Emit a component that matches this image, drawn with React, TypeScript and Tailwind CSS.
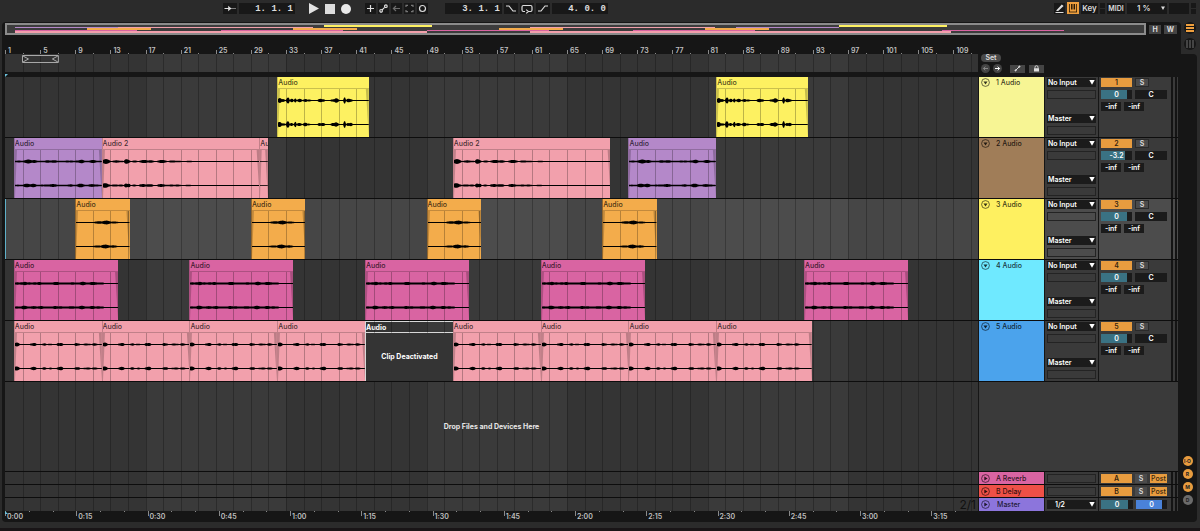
import React from 'react';

const TOTAL_BARS = 110.8;
const pct = (bars: number) => `${(bars / TOTAL_BARS) * 100}%`;

type Kind = 'yellow' | 'purple' | 'pink' | 'orange' | 'magenta' | 'loop' | 'stub' | 'off';
type ClipData = { start: number; end: number; kind: Kind; name: string };

const FILL: Record<Kind, string> = {
  yellow: 'bg-[#fdf161]',
  purple: 'bg-[#b488c9]',
  pink: 'bg-[#f2a0ac]',
  orange: 'bg-[#f3ac4b]',
  magenta: 'bg-[#d964a2]',
  loop: 'bg-[#f2a0ac]',
  stub: 'bg-[#f2a0ac]',
  off: 'bg-[#343434]',
};

/* Bursts of each sample as [from, to, peak], in pixels at 8.78 px per bar. */
const BURSTS: Record<Kind, { base: number; until: number; hits: number[][] }> = {
  yellow: {
    base: 0.6,
    until: 76,
    hits: [[-1, 4, 2.6], [3, 8, 1.6], [8, 12, 3.4], [12, 16, 1.9], [16, 19, 3.2], [19, 25, 1.7], [25, 30, 2], [29, 34, 1], [40, 48, 2], [53, 57, 1.8], [56, 62, 2.2], [66, 69, 3.4], [69, 76, 2.2]],
  },
  purple: {
    base: 0.7,
    until: 88,
    hits: [[0, 8, 1], [7, 23, 2], [24, 30, 1.2], [28, 45, 1.5], [50, 60, 1.3], [61, 71, 1.9], [73, 86, 1.5]],
  },
  pink: {
    base: 0.6,
    until: 92,
    hits: [[-2, 8, 2.4], [7, 22, 1.2], [21, 28, 2.6], [28, 36, 1], [35, 52, 1.6], [53, 66, 1.5], [64, 80, 1.1], [78, 94, 0.8]],
  },
  orange: { base: 0.5, until: 44, hits: [[16, 44, 1.5], [22, 38, 1.9]] },
  magenta: {
    base: 0.9,
    until: 90,
    hits: [[0, 5, 1.2], [4, 13, 2], [11, 24, 1.5], [22, 29, 1.9], [30, 37, 1.2], [36, 50, 1.7], [50, 62, 1.4], [61, 74, 1.7], [72, 88, 1.6]],
  },
  loop: {
    base: 0.6,
    until: 88,
    hits: [[-2, 5, 2], [15, 22, 1.8], [27, 32, 1.2], [33, 38, 1.2], [42, 49, 2.1], [60, 66, 1.8], [69, 77, 1.3], [78, 84, 1.5]],
  },
  stub: { base: 0.5, until: 0, hits: [] },
  off: { base: 0, until: 0, hits: [] },
};

function wavePath(kind: Kind, width: number, mid: number, seed: number) {
  const { base, until, hits } = BURSTS[kind];
  const up: string[] = [];
  const down: string[] = [];
  for (let x = 0; x <= width; x += 1) {
    const noise = 0.6 + 0.4 * Math.abs(Math.sin(x * 12.9 + seed * 3.7));
    let amp = x < until ? base : 0.4;
    for (const [from, to, peak] of hits) {
      if (x >= from && x <= to) {
        const shape = Math.sqrt(Math.max(0, Math.sin((Math.PI * (x - from)) / (to - from))));
        amp = Math.max(amp, peak * shape * noise);
      }
    }
    up.push(`${x},${(mid - amp).toFixed(2)}`);
    down.unshift(`${x},${(mid + amp).toFixed(2)}`);
  }
  return `M${up.join('L')}L${down.join('L')}Z`;
}

function Clip({ clip }: { clip: ClipData }) {
  const { start, end, kind, name } = clip;
  const width = Math.round((end - start) * 8.78);
  const style = { left: pct(start), width: pct(end - start) };
  if (kind === 'off') {
    return (
      <div className="absolute inset-y-0 flex flex-col border-l border-[#d8d8d8]" style={style}>
        <div className="h-3 overflow-hidden border-y border-[#d8d8d8] text-[7px] leading-[11px] font-bold text-white">{name}</div>
        <div className="relative z-30 flex flex-1 items-center justify-center bg-[#343434] text-[7px] font-bold whitespace-nowrap text-white">
          Clip Deactivated
        </div>
      </div>
    );
  }
  return (
    <div className={`absolute inset-y-0 flex flex-col border-l border-black/20 ${FILL[kind]}`} style={style}>
      <div className={`relative z-30 h-3 overflow-hidden border-b border-b-black/20 text-[7px] leading-[11px] font-medium whitespace-nowrap text-black/75 ${FILL[kind]}`}>
        {name}
      </div>
      <svg className="min-h-0 w-full flex-1" viewBox={`0 0 ${width} 48`} preserveAspectRatio="none" aria-hidden="true">
        <path d="M0 0H2L0 48Z" fill="#000" opacity=".2" />
        <path d={`M${width - 3} 0H${width}V48Z`} fill="#000" opacity=".22" />
        <path d={wavePath(kind, width, 11.5, 1)} />
        <path d={wavePath(kind, width, 35.5, 2)} />
      </svg>
    </div>
  );
}

const CELLS = Array.from({ length: 56 }, (_, i) => i);

function Shading({ bright = false }: { bright?: boolean }) {
  return (
    <div className="absolute inset-0 flex overflow-hidden" aria-hidden="true">
      {CELLS.map((i) => {
        const light = Math.floor(i / 8) % 2 === 1;
        const tone = bright ? (light ? 'bg-[#4c4c4c]' : 'bg-[#464646]') : light ? 'bg-[#3a3a3a]' : 'bg-[#343434]';
        return <div key={i} className={`shrink-0 ${tone}`} style={{ width: pct(2) }} />;
      })}
    </div>
  );
}

function Lines() {
  return (
    <div className="pointer-events-none absolute inset-0 z-20 flex overflow-hidden" aria-hidden="true">
      {CELLS.map((i) => (
        <div key={i} className={`shrink-0 ${i ? 'border-l border-black/25' : ''}`} style={{ width: pct(2) }} />
      ))}
    </div>
  );
}

function Disclosure({ right = false, label }: { right?: boolean; label: string }) {
  return (
    <button aria-label={label} className="size-[9px] shrink-0">
      <svg viewBox="0 0 9 9" className="size-[9px]">
        <circle cx="4.5" cy="4.5" r="3.9" fill="none" stroke="#000" strokeOpacity=".7" strokeWidth=".8" />
        <path d={right ? 'M3.3 2.4L6.6 4.5L3.3 6.6Z' : 'M2.5 3.4H6.5L4.5 6.4Z'} fill="#000" fillOpacity=".8" />
      </svg>
    </button>
  );
}

function Routing({ label, options, inset = false }: { label: string; options: string[]; inset?: boolean }) {
  return (
    <label className="relative block h-[9px]">
      <select
        aria-label={label}
        className={`block h-[9px] w-full appearance-none bg-[#1b1b1b] text-[7px] leading-[9px] font-semibold text-white ${inset ? 'pl-2' : 'pl-px'}`}
      >
        {options.map((o) => (
          <option key={o}>{o}</option>
        ))}
      </select>
      <svg viewBox="0 0 6 5" className="pointer-events-none absolute top-0.5 right-px h-[5px] w-1.5" aria-hidden="true">
        <path d="M.3 0H5.7L3 4.8Z" fill="#fff" />
      </svg>
    </label>
  );
}

const Slot = () => <div className="h-[9px] border border-[#232323]" />;

function Meter() {
  return (
    <div className="flex gap-0.5 self-stretch">
      <div className="w-0.5 bg-[#141414]" />
      <div className="w-0.5 bg-[#141414]" />
    </div>
  );
}

const CHIP = 'h-[9px] text-center text-[7px] leading-[9px] font-semibold';

type TrackData = {
  n: number;
  header: string;
  volume: string;
  volumeFill: string;
  selected?: boolean;
  clips: ClipData[];
};

const many = (kind: Kind, name: string, starts: number[], length: number): ClipData[] =>
  starts.map((start) => ({ kind, name, start, end: start + length }));

const TRACKS: TrackData[] = [
  { n: 1, header: 'bg-[#f7f594]', volume: '0', volumeFill: 'from-85% to-85%', clips: many('yellow', 'Audio', [31, 81], 10.45) },
  {
    n: 2,
    header: 'bg-[#a07d58]',
    volume: '-3.2',
    volumeFill: 'from-78% to-78%',
    clips: [
      ...many('purple', 'Audio', [1, 71], 10),
      ...many('pink', 'Audio 2', [11, 51], 17.95),
      { kind: 'stub', name: 'Audio', start: 28.95, end: 29.95 },
    ],
  },
  { n: 3, header: 'bg-[#fef060]', volume: '0', volumeFill: 'from-85% to-85%', selected: true, clips: many('orange', 'Audio', [8, 28, 48, 68], 6.2) },
  { n: 4, header: 'bg-[#6fe9ff]', volume: '0', volumeFill: 'from-85% to-85%', clips: many('magenta', 'Audio', [1, 21, 41, 61, 91], 11.85) },
  {
    n: 5,
    header: 'bg-[#4ba3ec]',
    volume: '0',
    volumeFill: 'from-85% to-85%',
    clips: [
      ...many('loop', 'Audio', [1, 11, 21, 31], 10),
      { kind: 'off', name: 'Audio', start: 41, end: 51 },
      ...many('loop', 'Audio', [51, 61, 71], 10),
      { kind: 'loop', name: 'Audio', start: 81, end: 91.9 },
    ],
  },
];

const CONTROLS = 'grid w-[200px] shrink-0 grid-cols-[65px_53px_1fr] gap-px pl-px';

function Track({ track }: { track: TrackData }) {
  const tone = track.selected ? 'bg-[#4c4c4c]' : 'bg-[#3a3a3a]';
  return (
    <div className="flex h-[61px] border-b border-[#0d0d0d]">
      <div className="relative isolate min-w-0 flex-1">
        <Shading bright={track.selected} />
        {track.clips.map((c) => (
          <Clip key={c.start} clip={c} />
        ))}
        <Lines />
        {track.selected && <div className="absolute inset-y-0 left-0 z-30 w-px bg-[#5fb0c8]" />}
      </div>
      <div className={CONTROLS}>
        <div className={`flex items-start gap-1.5 px-0.5 pt-px text-[7px] leading-[9px] font-medium text-black/80 ${track.header}`}>
          <Disclosure label={`Fold track ${track.n}`} />
          {track.n} Audio
        </div>
        <div className={`flex flex-col gap-[3px] px-0.5 pt-px ${tone}`}>
          <Routing label={`Input of track ${track.n}`} options={['No Input']} />
          <Slot />
          <div className="h-[9px]" />
          <Routing label={`Output of track ${track.n}`} options={['Master']} />
          <Slot />
        </div>
        <div className={`flex justify-between pr-px pl-0.5 ${tone}`}>
          <div className="flex flex-col gap-[3px] pt-px">
            <div className="flex gap-[3px]">
              <button className={`${CHIP} w-[31px] bg-[#e89c3f] text-black/80`}>{track.n}</button>
              <button className="h-[9px] w-3.5 border border-[#2a2a2a] bg-[#4b4b4b] text-center text-[7px] leading-[7px] font-semibold text-[#ddd]">S</button>
            </div>
            <div className="flex gap-[3px]">
              <input
                aria-label={`Volume of track ${track.n}`}
                defaultValue={track.volume}
                className={`${CHIP} w-[31px] bg-linear-to-r from-[#3a7283] to-[#1b1b1b] text-white ${track.volumeFill}`}
              />
              <input aria-label={`Pan of track ${track.n}`} defaultValue="C" className={`${CHIP} w-8 bg-[#1b1b1b] text-white`} />
            </div>
            <div className="flex gap-[3px]">
              <input aria-label={`Send A of track ${track.n}`} defaultValue="-inf" className={`${CHIP} w-5 bg-[#1b1b1b] text-white`} />
              <input aria-label={`Send B of track ${track.n}`} defaultValue="-inf" className={`${CHIP} w-5 bg-[#1b1b1b] text-white`} />
            </div>
          </div>
          <Meter />
        </div>
      </div>
    </div>
  );
}

function ReturnTrack({ letter, name, header }: { letter: string; name: string; header: string }) {
  return (
    <div className="flex h-[13px] border-b border-[#0d0d0d]">
      <div className="relative isolate min-w-0 flex-1">
        <Shading />
        <Lines />
      </div>
      <div className={CONTROLS}>
        <div className={`flex items-center gap-1.5 px-0.5 text-[7px] leading-[9px] font-medium text-black/80 ${header}`}>
          <Disclosure right label={`Unfold ${name}`} />
          {letter} {name}
        </div>
        <div className="flex flex-col justify-center bg-[#3a3a3a] px-0.5">
          <Slot />
        </div>
        <div className="flex items-center justify-between bg-[#3a3a3a] pr-px pl-0.5">
          <div className="flex w-[66px] justify-between">
            <button className={`${CHIP} w-[31px] bg-[#e89c3f] text-black/80`}>{letter}</button>
            <button className={`${CHIP} w-3 bg-[#4b4b4b] text-[#ddd]`}>S</button>
            <button className="h-[9px] w-[17px] bg-[#e89c3f] text-center text-[7px] leading-[9px] font-medium text-black/80">Post</button>
          </div>
          <Meter />
        </div>
      </div>
    </div>
  );
}

function MasterTrack() {
  return (
    <div className="flex h-[13px]">
      <div className="relative isolate flex min-w-0 flex-1 items-center justify-end">
        <Shading />
        <Lines />
        <span className="relative z-30 pr-0.5 text-[12px] leading-[13px] text-[#111]">2/1</span>
      </div>
      <div className={CONTROLS}>
        <div className="flex items-center gap-[7px] bg-[#8c75dc] px-0.5 text-[7px] leading-[9px] font-medium text-black/80">
          <Disclosure right label="Unfold Master" />
          Master
        </div>
        <div className="flex flex-col justify-center bg-[#3a3a3a] px-0.5">
          <Routing label="Cue output" options={['1/2']} inset />
        </div>
        <div className="flex items-center justify-between bg-[#3a3a3a] pr-px pl-0.5">
          <div className="flex gap-[3px]">
            <input aria-label="Master volume" defaultValue="0" className={`${CHIP} w-8 bg-linear-to-r from-[#3a7283] from-85% to-[#1b1b1b] to-85% text-white`} />
            <input aria-label="Cue volume" defaultValue="0" className={`${CHIP} w-[31px] bg-linear-to-r from-[#4a82d9] from-85% to-[#1b1b1b] to-85% text-white`} />
          </div>
          <Meter />
        </div>
      </div>
    </div>
  );
}

function Overview() {
  return (
    <div className="flex h-3 flex-1 flex-col bg-[#3c3c3c] py-0.5 ring-2 ring-[#8b8b8b] ring-inset">
      {TRACKS.map((t) => (
        <div key={t.n} className="relative min-h-0 flex-1">
          {t.clips
            .filter((c) => c.kind !== 'off')
            .map((c) => (
              <div key={c.start} className={`absolute inset-y-0 ${FILL[c.kind]}`} style={{ left: pct(c.start), width: pct(c.end - c.start) }} />
            ))}
        </div>
      ))}
    </div>
  );
}

function BarRuler() {
  return (
    <div className="mr-[203px] flex h-[19px] overflow-hidden">
      {CELLS.map((i) => (
        <div key={i} className="flex shrink-0 items-end" style={{ width: pct(2) }}>
          <div className={`w-px shrink-0 bg-[#8a8a8a] ${i % 2 ? 'h-px' : 'h-1'}`} />
          {i % 2 === 0 && <span className="ml-0.5 text-[7px] leading-[7px] font-semibold text-[#c0c0c0]">{i * 2 + 1}</span>}
        </div>
      ))}
    </div>
  );
}

function TimeRuler() {
  return (
    <div className="relative mr-[200px] flex h-[11px] overflow-hidden">
      {Array.from({ length: 41 }, (_, i) => {
        const seconds = i * 5;
        const label = `${Math.floor(seconds / 60)}:${String(seconds % 60).padStart(2, '0')}`;
        return (
          <div key={i} className="flex shrink-0" style={{ width: pct(2.706) }}>
            <div className={`w-px shrink-0 bg-[#8a8a8a] ${i % 3 ? 'h-px' : 'h-[5px]'}`} />
            {i % 3 === 0 && <span className="ml-px text-[7px] leading-[11px] font-semibold text-[#c0c0c0]">{label}</span>}
          </div>
        );
      })}
      <svg className="absolute top-0 left-0 size-[3px]" viewBox="0 0 3 3" aria-hidden="true"><path d="M0 0L3 3H0Z" fill="#6cc3de" /></svg>
    </div>
  );
}

type ToolProps = { label: string; children: React.ReactNode; className?: string; tone?: string };

function Tool({ label, children, className = 'w-[11px]', tone = 'text-[#ddd]' }: ToolProps) {
  return (
    <button aria-label={label} className={`flex h-[11px] items-center justify-center bg-[#181818] ${tone} ${className}`}>
      {children}
    </button>
  );
}

const Glyph = ({ d, w = 11 }: { d: string; w?: number }) => (
  <svg width={w} height="11" viewBox={`0 0 ${w} 11`} fill="none" stroke="currentColor" strokeWidth="1.2" aria-hidden="true">
    <path d={d} />
  </svg>
);

const POSITION = 'h-[11px] bg-[#181818] pt-px text-right font-["Liberation_Mono",monospace] text-[9px] leading-[10px] font-bold text-[#ddd]';

function TopBar() {
  return (
    <header className="flex h-[22px] items-start justify-between gap-4 px-1 pt-[3px]">
      <div className="ml-[219px] flex items-start">
        <Tool label="Nudge" className="mr-0.5 w-3.5">
          <svg width="14" height="11" viewBox="0 0 14 11" aria-hidden="true">
            <path d="M1.5 5.5H12.5" stroke="currentColor" strokeDasharray="7 1 1 1 1" />
            <path d="M5.2 2.8L8.4 5.5L5.2 8.2Z" fill="currentColor" />
          </svg>
        </Tool>
        <input aria-label="Arrangement position" defaultValue="1. 1. 1" className={`${POSITION} mr-3.5 w-14 pr-0.5`} />
        <button aria-label="Play" className="mr-1.5 text-[#e2e2e2]">
          <svg width="10" height="11" viewBox="0 0 10 11"><path d="M0 0L10 5.5L0 11Z" fill="currentColor" /></svg>
        </button>
        <button aria-label="Stop" className="mt-px mr-1.5 size-2.5 bg-[#dcdcdc]" />
        <button aria-label="Record" className="mt-px mr-3.5 size-2.5 rounded-full bg-[#e8e8e8]" />
        <div className="mr-[17px] flex gap-0.5">
          <Tool label="Overdub"><Glyph d="M5.5 2V9M2 5.5H9" /></Tool>
          <Tool label="Automation arm"><Glyph d="M4.2 6.8L6.8 4.2M1.8 7.8a1.3 1.3 0 1 0 2.6 0a1.3 1.3 0 1 0-2.6 0M6.6 3.2a1.3 1.3 0 1 0 2.6 0a1.3 1.3 0 1 0-2.6 0" /></Tool>
          <Tool label="Re-enable automation" tone="text-[#6c6c6c]"><Glyph d="M9 5.5H2.4M5 3L2.4 5.5L5 8" /></Tool>
          <Tool label="Capture" tone="text-[#777]"><Glyph d="M2 4V2.3H4M7 2.3H9V4M9 7V8.7H7M4 8.7H2V7" /></Tool>
          <Tool label="Session record"><Glyph d="M2.5 5.5a3 3 0 1 0 6 0a3 3 0 1 0-6 0" /></Tool>
        </div>
        <div className="flex gap-0.5">
          <input aria-label="Loop start" defaultValue="3. 1. 1" className={`${POSITION} w-[57px] pr-0.5`} />
          <Tool label="Punch in" className="w-3.5"><Glyph w={14} d="M2 3H5L9 8H12" /></Tool>
          <Tool label="Loop" className="w-3.5"><Glyph w={14} d="M5 8.5H3.4Q2 8.5 2 7V4Q2 2.5 3.4 2.5H10.6Q12 2.5 12 4V7Q12 8.5 10.6 8.5H7.5M6.2 6.6L8.4 8.5L6.2 10.4" /></Tool>
          <Tool label="Punch out" className="w-3.5"><Glyph w={14} d="M2 8H5L9 3H12" /></Tool>
          <input aria-label="Loop length" defaultValue="4. 0. 0" className={`${POSITION} w-14 pr-0.5`} />
        </div>
      </div>
      <div className="flex items-start gap-0.5 text-[8px] leading-[11px] font-semibold">
        <Tool label="Draw mode">
          <svg width="11" height="11" viewBox="0 0 11 11" fill="currentColor" aria-hidden="true">
            <path d="M2.4 7.2L7.8 1.4L9.6 3L4.2 8H2.4ZM1.5 9H9.5V10H1.5Z" />
          </svg>
        </Tool>
        <button aria-label="Computer MIDI keyboard" className="-mt-px h-3 w-3 bg-[#ee9f3e]">
          <svg width="12" height="12" viewBox="0 0 12 12" fill="none" stroke="#2a1a05" aria-hidden="true">
            <path d="M2.5 2V10M9.5 2V10M2 10H10" strokeWidth=".8" />
            <path d="M4.8 2V7.5M7.3 2V7.5" strokeWidth="1.5" />
          </svg>
        </button>
        <Tool label="Key map" className="w-[17px]">Key</Tool>
        <div className="flex h-[11px] w-[5px] flex-col gap-px"><i className="flex-1 bg-[#181818]" /><i className="flex-1 bg-[#181818]" /></div>
        <Tool label="MIDI map" className="w-[18px] text-[7px]">MIDI</Tool>
        <label className="relative block h-[11px] w-10">
          <select aria-label="CPU load" className="block h-[11px] w-full appearance-none bg-[#181818] pl-2.5 text-[8px] leading-[11px] font-semibold text-[#ddd]">
            <option>1 %</option>
          </select>
          <svg viewBox="0 0 4 4" className="pointer-events-none absolute top-[3px] right-0.5 size-1" aria-hidden="true"><path d="M0 .5H4L2 4Z" fill="#ddd" /></svg>
        </label>
        <div className="h-[11px] w-5 bg-[#181818]" />
        <div className="flex h-[11px] w-[5px] flex-col gap-px"><i className="flex-1 bg-[#181818]" /><i className="flex-1 bg-[#181818]" /></div>
      </div>
    </header>
  );
}

function LocatorTools() {
  const round = 'flex size-[9px] items-center justify-center rounded-full bg-[#444]';
  const square = 'flex h-2 w-[15px] items-center justify-center bg-[#454545] text-[#ddd]';
  return (
    <div className="w-[200px] shrink-0 pl-[3px]">
      <button className="block h-2 w-5 rounded-full bg-[#4a4a4a] text-center text-[7px] leading-2 font-semibold text-[#ddd]">Set</button>
      <div className="mt-0.5 flex items-center">
        <button aria-label="Previous locator" className={`${round} mr-[3px] text-[#888]`}>
          <svg width="7" height="7" viewBox="0 0 7 7" fill="none" stroke="currentColor"><path d="M6 3.5H1.5M3.3 1.6L1.4 3.5L3.3 5.4" /></svg>
        </button>
        <button aria-label="Next locator" className={`${round} mr-2 text-white`}>
          <svg width="7" height="7" viewBox="0 0 7 7" fill="none" stroke="currentColor"><path d="M1 3.5H5.5M3.7 1.6L5.6 3.5L3.7 5.4" /></svg>
        </button>
        <button aria-label="Automation mode" className={`${square} mr-1`}>
          <svg width="7" height="7" viewBox="0 0 7 7" fill="currentColor" stroke="currentColor"><path d="M1.5 5.5L5.5 1.5" /><circle cx="1.6" cy="5.4" r=".6" /><circle cx="5.4" cy="1.6" r=".6" /></svg>
        </button>
        <button aria-label="Lock envelopes" className={square}>
          <svg width="7" height="7" viewBox="0 0 7 7"><path d="M1 3.2H6V6.5H1Z" fill="currentColor" /><path d="M2 3.2V2.2a1.5 1.5 0 0 1 3 0V3.2" fill="none" stroke="currentColor" strokeWidth=".9" /></svg>
        </button>
      </div>
    </div>
  );
}

const SECTION_TOGGLES = [
  { text: 'I·O', tone: 'bg-[#e89c3f]' },
  { text: 'R', tone: 'bg-[#e89c3f]' },
  { text: 'M', tone: 'bg-[#e89c3f]' },
  { text: 'D', tone: 'bg-[#6b6b6b]' },
];

export default function App() {
  return (
    <div className='flex min-h-screen flex-col bg-[#2b2b2b] font-["Inter",sans-serif] text-[#ddd]'>
      <TopBar />
      <main className="flex flex-1 flex-col pr-[3px] pl-0.5">
        <div className="flex">
          <div className="min-w-0 flex-1 rounded-t-sm bg-[#161616] pt-px pl-[3px]">
            <div className="flex items-center gap-[3px] pr-1">
              <Overview />
              <button className="h-[9px] w-3 bg-[#444] text-center text-[7px] leading-[9px] font-bold">H</button>
              <button className="h-[9px] w-[13px] bg-[#444] text-center text-[7px] leading-[9px] font-bold">W</button>
            </div>
            <BarRuler />
          </div>
          <div className="flex w-4 flex-col items-end gap-1 pr-px">
            <button aria-label="Arrangement view" className="flex size-3 flex-col items-center justify-center gap-px rounded-full bg-[#161616]">
              <i className="h-0.5 w-2 bg-[#ee9f3e]" />
              <i className="h-0.5 w-2 bg-[#ee9f3e]" />
              <i className="h-0.5 w-2 bg-[#ee9f3e]" />
            </button>
            <button aria-label="Session view" className="flex size-3 items-center justify-center gap-px rounded-full bg-[#161616]">
              <i className="h-2 w-0.5 bg-[#444]" />
              <i className="h-2 w-0.5 bg-[#444]" />
              <i className="h-2 w-0.5 bg-[#444]" />
            </button>
          </div>
        </div>
        <div className="flex flex-1 rounded-tr-sm rounded-b-sm bg-[#161616] pl-[3px]">
          <div className="flex min-w-0 flex-1 flex-col">
            <div className="flex h-[23px]">
              <div className="relative min-w-0 flex-1">
                <div className="relative isolate h-[18px]">
                  <Shading />
                  <Lines />
                  <svg className="absolute top-0 z-30 h-[9px]" style={{ left: pct(1.95), width: pct(4.2) }} viewBox="0 0 37 9" fill="none" stroke="#aaa" aria-hidden="true">
                    <path d="M.5 1.5H36.5V8.5H.5ZM1 2L6.5 5L1 8M36 2L30.5 5L36 8" />
                  </svg>
                </div>
                <svg className="absolute bottom-0 left-0 size-[3px]" viewBox="0 0 3 3" aria-hidden="true"><path d="M0 0H3L0 3Z" fill="#6cc3de" /></svg>
              </div>
              <LocatorTools />
            </div>
            {TRACKS.map((t) => (
              <Track key={t.n} track={t} />
            ))}
            <div className="flex flex-1 border-b border-[#0d0d0d]">
              <div className="relative isolate flex min-w-0 flex-1 items-center justify-center">
                <Shading />
                <Lines />
                <p className="relative z-30 text-[7px] leading-[9px] font-bold text-[#e6e6e6]">Drop Files and Devices Here</p>
              </div>
              <div className="w-[200px] shrink-0 pl-px">
                <div className="h-full bg-[#3a3a3a]" />
              </div>
            </div>
            <ReturnTrack letter="A" name="Reverb" header="bg-[#d964a2]" />
            <ReturnTrack letter="B" name="Delay" header="bg-[#ee5047]" />
            <MasterTrack />
            <TimeRuler />
          </div>
          <div className="flex w-[19px] flex-col items-center justify-end gap-[3px] pb-[17px]">
            {SECTION_TOGGLES.map((s) => (
              <button key={s.text} className={`flex size-2.5 items-center justify-center rounded-full text-[5px] leading-none font-bold text-[#222] ${s.tone}`}>
                {s.text}
              </button>
            ))}
          </div>
        </div>
      </main>
      <footer className="mt-1.5 h-[3px] bg-[#191517]" />
    </div>
  );
}
